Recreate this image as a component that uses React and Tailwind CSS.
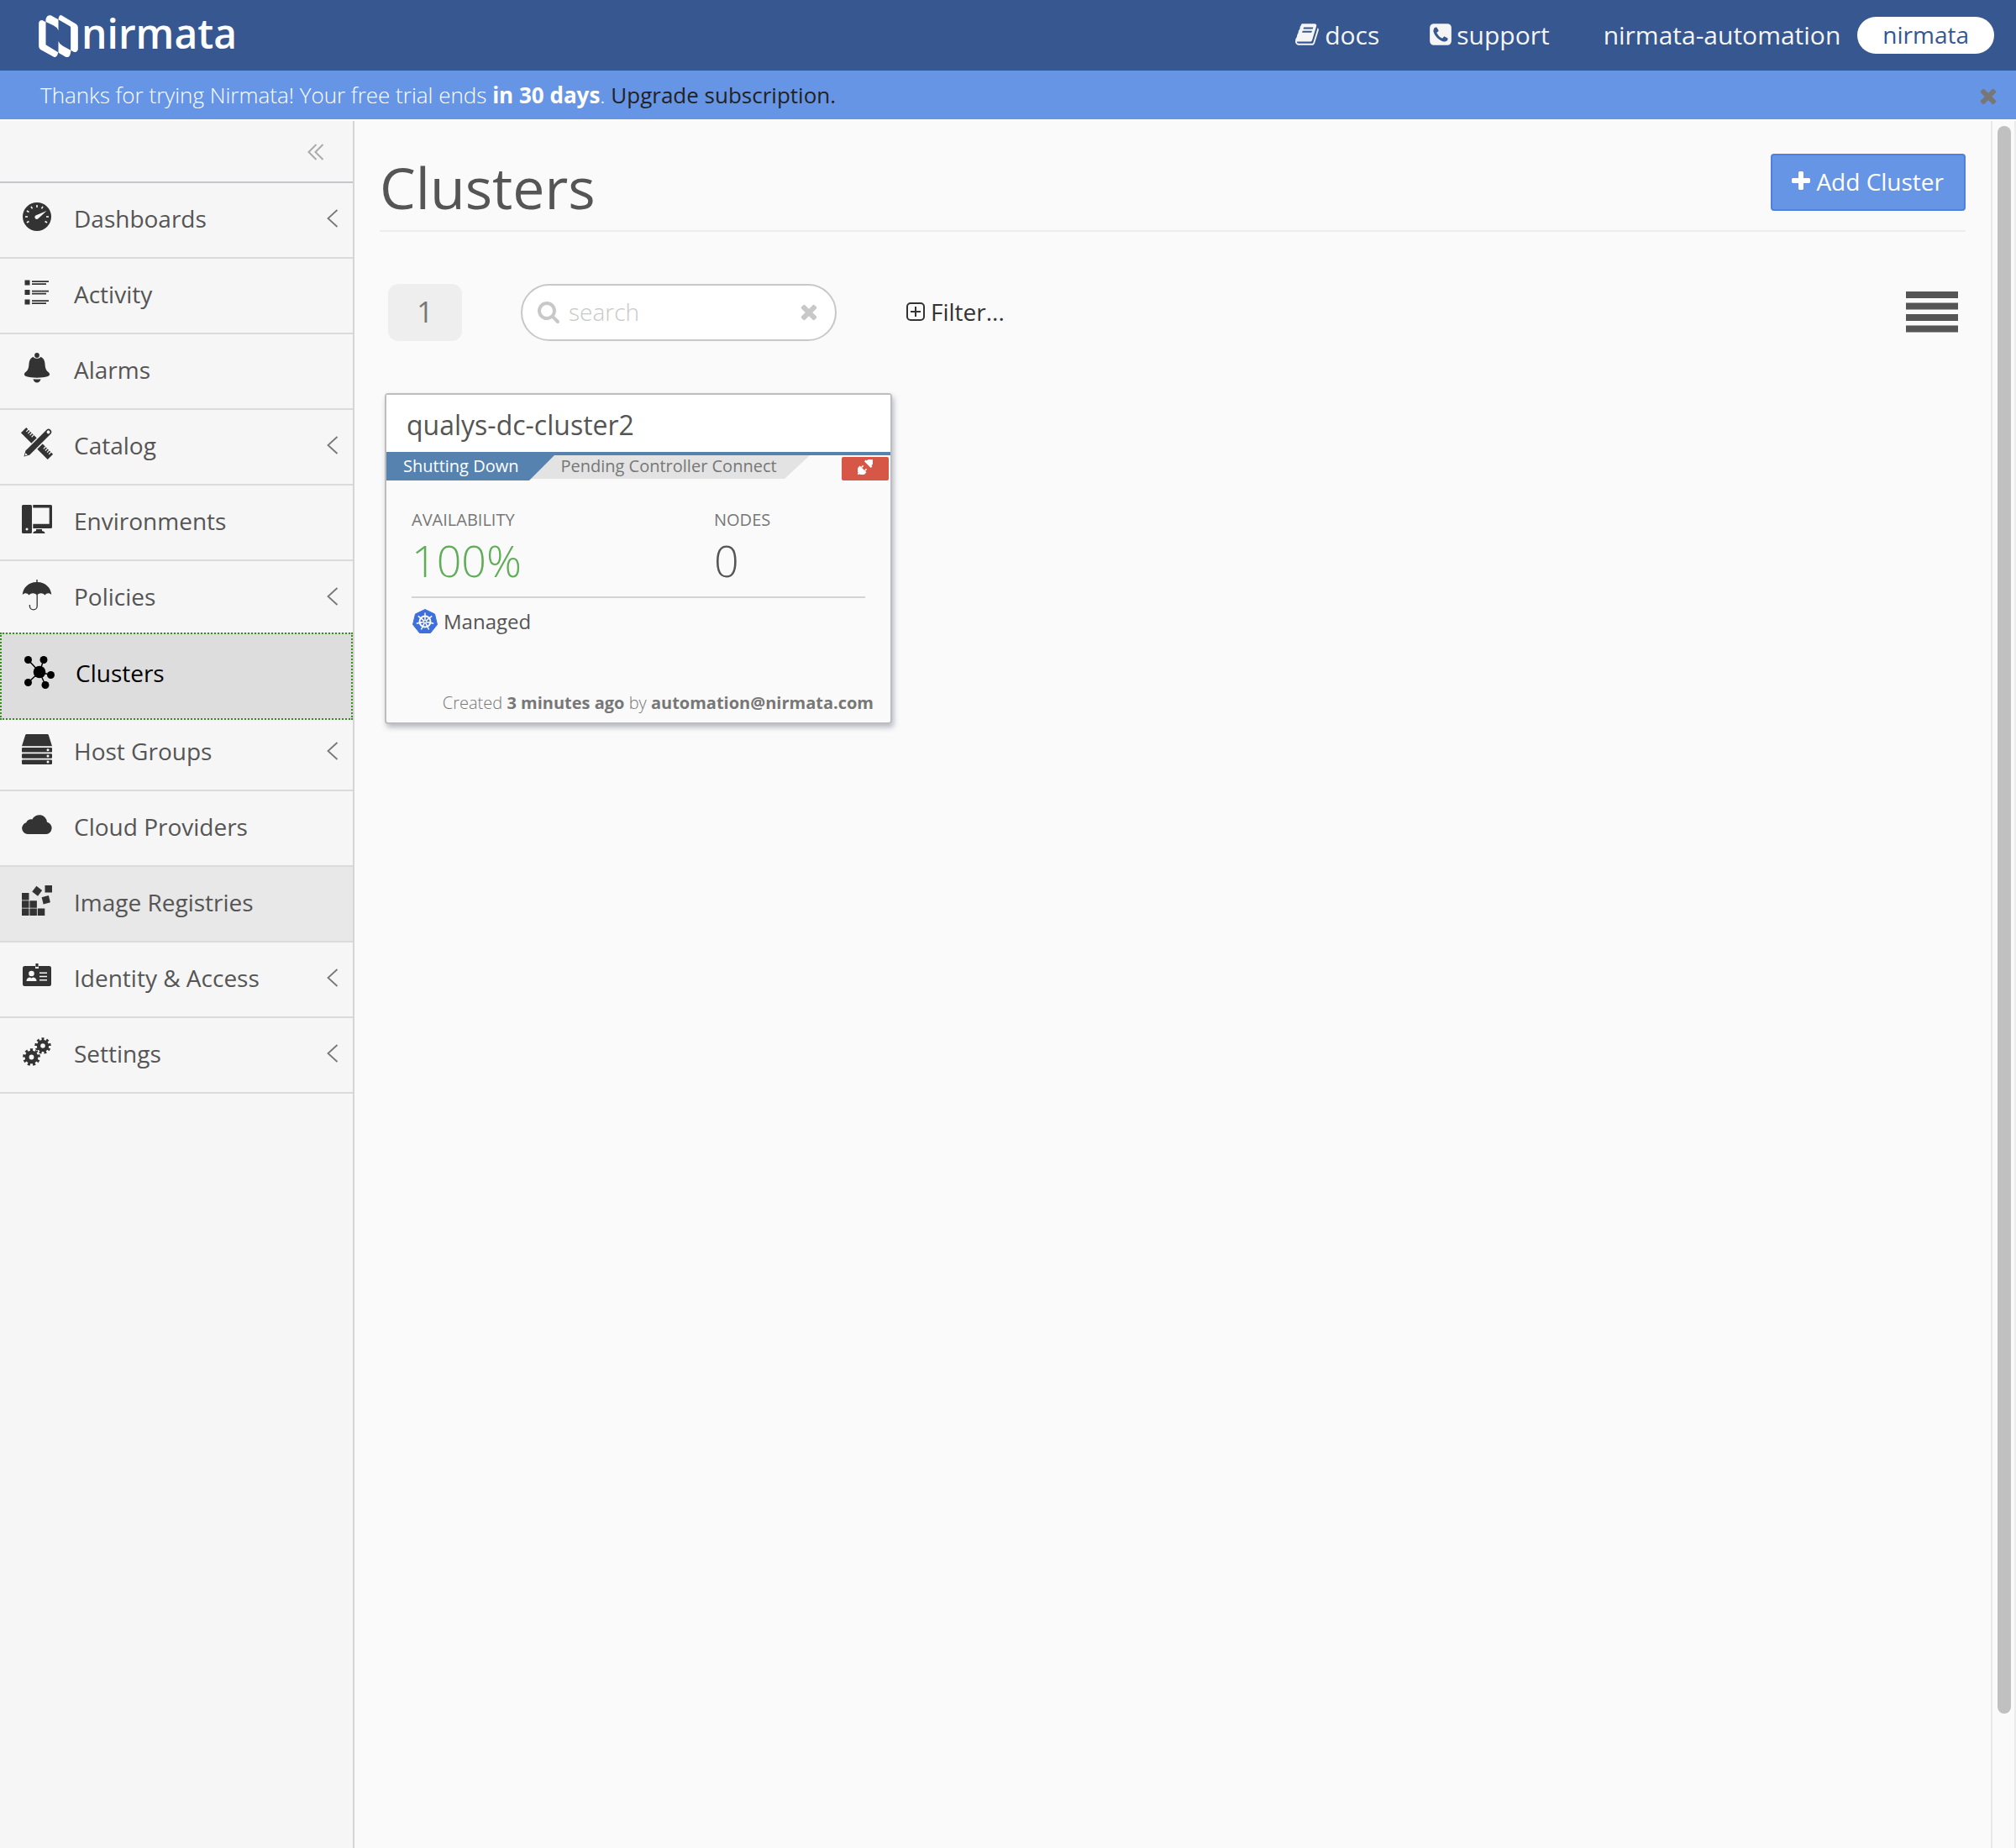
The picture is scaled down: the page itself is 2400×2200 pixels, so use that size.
import React from "react";

const FA = {
  book: "M1639 478q40 57 18 129l-275 906q-19 64-76.500 107.500t-122.500 43.500h-923q-77 0-148.500-53.500t-99.500-131.500q-24-67-2-127 0-4 3-27t4-37q1-8-3-21.500t-3-19.500q2-11 8-21t16.500-23.500 16.500-23.500q23-38 45-91.500t30-91.500q3-10 .5-30t-.5-28q3-11 17-28t17-23q21-36 42-92t25-90q1-9-2.500-32t.5-28q4-13 22-30.500t22-22.500q19-26 42.500-84.500t27.500-96.500q1-8-3-25.500t-2-26.500q2-8 9-18t18-23 17-21q8-12 16.500-30.500t15-35 16-36 19.500-32 26.500-23.500 36-11.500 47.500 5.500l-1 3q38-9 51-9h761q74 0 114 56t18 130l-274 906q-36 119-71.500 153.500t-128.500 34.500h-869q-27 0-38 15-11 16-1 43 24 70 144 70h923q29 0 56-15.500t35-41.500l300-987q7-22 5-57 38 15 59 43zm-1064 2q-4 13 2 22.500t20 9.500h608q13 0 25.500-9.500t16.500-22.500l21-64q4-13-2-22.500t-20-9.500h-608q-13 0-25.500 9.500t-16.500 22.500zm-83 256q-4 13 2 22.500t20 9.500h608q13 0 25.500-9.500t16.500-22.500l21-64q4-13-2-22.500t-20-9.500h-608q-13 0-25.500 9.500t-16.500 22.500z",
  phone: "M1408 1193q0-11-2-16t-18-16.500-40.500-25-47.500-26.500-45.500-25-28.500-15q-5-3-19-13t-25-15-21-5q-15 0-36.500 20.500t-39.500 45-38.500 45-33.500 20.500q-7 0-16.500-3.500t-15.500-6.500-17-9.500-14-8.500q-99-55-170-126.500t-127-170.500q-2-3-8.500-14t-9.500-17-6.500-15.500-3.500-16.500q0-13 20.500-33.500t45-38.500 45-39.500 20.500-36.500q0-10-5-21t-15-25-13-19q-3-6-15-28.500t-25-45.500-26.500-47.500-25-40.500-16.500-18-16-2q-48 0-101 22-46 21-80 94.500t-34 130.500q0 16 2.500 34t5 30.500 9 33 10 29.500 12.500 33 11 30q60 164 216.500 320.500t320.500 216.500q6 2 30 11t33 12.500 29.500 10 33 9 30.500 5 34 2.500q57 0 130.500-34t94.500-80q22-53 22-101zm256-777v960q0 119-84.500 203.500t-203.500 84.500h-960q-119 0-203.500-84.500t-84.500-203.500v-960q0-119 84.500-203.500t203.500-84.500h960q119 0 203.500 84.500t84.500 203.500z",
  times: "M1490 1322q0 40-28 68l-136 136q-28 28-68 28t-68-28l-294-294-294 294q-28 28-68 28t-68-28l-136-136q-28-28-28-68t28-68l294-294-294-294q-28-28-28-68t28-68l136-136q28-28 68-28t68 28l294 294 294-294q28-28 68-28t68 28l136 136q28 28 28 68t-28 68l-294 294 294 294q28 28 28 68z",
  plus: "M1600 736v192q0 40-28 68t-68 28h-416v416q0 40-28 68t-68 28h-192q-40 0-68-28t-28-68v-416h-416q-40 0-68-28t-28-68v-192q0-40 28-68t68-28h416v-416q0-40 28-68t68-28h192q40 0 68 28t28 68v416h416q40 0 68 28t28 68z",
  search: "M1216 832q0-185-131.500-316.500t-316.500-131.500-316.500 131.500-131.500 316.500 131.500 316.500 316.500 131.500 316.500-131.500 131.500-316.500zm512 832q0 52-38 90t-90 38q-54 0-90-38l-343-342q-179 124-399 124-143 0-273.500-55.500t-225-150-150-225-55.500-273.500 55.500-273.500 150-225 225-150 273.500-55.500 273.500 55.500 225 150 150 225 55.500 273.500q0 220-124 399l343 343q37 37 37 90z",
};

function Fa({ name, className }) {
  return (
    <svg viewBox="0 0 1792 1792" fill="currentColor" aria-hidden="true" className={className}>
      <path d={FA[name]} />
    </svg>
  );
}

function gearPath(cx, cy, outer, inner, hole) {
  const teeth = 9;
  const pts = [];
  for (let i = 0; i < teeth; i++) {
    const a = (i * 2 * Math.PI) / teeth - Math.PI / 2;
    const step = (2 * Math.PI) / teeth;
    [[-0.26, inner], [-0.24, outer], [0.24, outer], [0.26, inner]].forEach(([k, r]) => {
      pts.push(`${(cx + r * Math.cos(a + k * step)).toFixed(2)} ${(cy + r * Math.sin(a + k * step)).toFixed(2)}`);
    });
  }
  return `M${pts.join("L")}ZM${cx - hole} ${cy}a${hole} ${hole} 0 1 0 ${hole * 2} 0a${hole} ${hole} 0 1 0 ${-hole * 2} 0Z`;
}

const TICKS = [-120, -90, -60, -30, 0, 30, 90, 120];

const icons = {
  dashboard: (
    <>
      <circle cx="18" cy="18" r="17" />
      <g stroke="#f6f6f6" strokeWidth="1.600">
        {TICKS.map((a) => (
          <path key={a} d="M18 4V7" transform={`rotate(${a} 18 18)`} />
        ))}
      </g>
      <path d="M29.500 11 20 19.800a2.500 2.500 0 1 1-2.300-3.900z" fill="#f6f6f6" />
    </>
  ),
  activity: (
    <>
      <path d="M3.500 3.500h6v6h-6zM3.500 15h6v6h-6zM3.500 26.500h6v6h-6z" />
      <path d="M12 4.300h20v1.600H12zM12 7.300h17v1.600H12zM12 15.800h20v1.600H12zM12 18.800h17v1.600H12zM12 27.300h20v1.600H12zM12 30.300h17v1.600H12z" />
    </>
  ),
  bell: (
    <>
      <circle cx="18" cy="3" r="2.900" />
      <path d="M13.700 4.800C14.500 7.500 21.500 7.500 22.300 4.800 25.500 6 27.300 9 27.500 13c.3 6 1.500 8 4.500 10.500 1.800 1.600 1.300 3.700-1 4.400-7 2.300-19 2.300-26 0-2.300-.7-2.800-2.800-1-4.400C7 21 8.200 19 8.500 13c.2-4 2-7 5.200-8.200z" />
      <path d="M13.500 31.200q4.500.6 9 0-1.200 4.300-4.500 4.300t-4.500-4.300z" />
    </>
  ),
  catalog: (
    <>
      <g transform="rotate(45 18 18)">
        <path d="M-4.500 13.500h45v9h-45z" />
        <path d="M-1 13v4M2 13v4M5 13v4M8 13v4M28 13v4M31 13v4M34 13v4M37 13v4" stroke="#f6f6f6" strokeWidth="1.200" />
      </g>
      <g transform="rotate(45 18 18)">
        <path d="M13.800-1.500a4.200 4.200 0 0 1 8.400 0V34L18 41.500l-4.200-7.500z" stroke="#f6f6f6" strokeWidth="1.500" />
        <circle cx="18" cy="-1.200" r="2" fill="#f6f6f6" />
        <path d="M16.300 35.500h3.400l-1.700 3z" fill="#f6f6f6" />
      </g>
    </>
  ),
  computer: (
    <>
      <path fillRule="evenodd" d="M1.500 1h9A1.500 1.500 0 0 1 12 2.500v31a1.500 1.500 0 0 1-1.500 1.500h-9A1.500 1.500 0 0 1 0 33.500v-31A1.500 1.500 0 0 1 1.500 1zM6 28.500a1.500 1.500 0 1 0 .01 0z" />
      <path fillRule="evenodd" d="M13.300 1H34.500A1.500 1.500 0 0 1 36 2.500v25a1.500 1.500 0 0 1-1.500 1.500H13.300zM13.300 4.500v19.200H32.700V4.500z" />
      <path d="M17 30h7v2q3.500.5 3.500 3H13.300q0-2.500 3.700-3z" />
    </>
  ),
  umbrella: (
    <>
      <path d="M17.300 0h1.400v3C28 3.200 34.500 9.500 35.300 18c-2.800-2.400-5.600-2.400-7.800.4-3-3-6.300-3-9.500 0-3.200-3-6.500-3-9.500 0C6.300 15.600 3.500 15.600.7 18 1.500 9.500 8 3.200 17.300 3z" />
      <path d="M18.200 18v13.500a4.400 4.400 0 0 1-8.800 0V30" fill="none" stroke="currentColor" strokeWidth="1.300" />
    </>
  ),
  cluster: (
    <>
      <path d="M19 19 5.500 4.500M19 19 24 4.500M19 19 32.500 22.500M19 19 5.500 31.500M19 19 26 34.500" stroke="currentColor" strokeWidth="1.500" />
      <circle cx="19" cy="19" r="7.300" />
      <circle cx="5.500" cy="4.500" r="4.500" />
      <circle cx="24" cy="4.500" r="4.500" />
      <circle cx="32.500" cy="22.500" r="4.500" />
      <circle cx="5.500" cy="31.500" r="4.500" />
      <circle cx="26" cy="34.500" r="4.500" />
    </>
  ),
  server: (
    <>
      <path d="M5.500 0h25q1 0 1.300 1L36 14.300H0L4.200 1Q4.500 0 5.500 0z" />
      {[16, 23.200, 30.400].map((y) => (
        <g key={y}>
          <rect x="0" y={y} width="36" height="5.600" rx="1.200" />
          <circle cx="31" cy={y + 2.700} r="1.500" fill="#f6f6f6" />
        </g>
      ))}
    </>
  ),
  cloud: <path d="M7 29a7 7 0 0 1-1.800-13.700A6 6 0 0 1 12.300 11.500 9.300 9.300 0 0 1 30 14.800 7.200 7.200 0 0 1 29 29z" />,
  registry: (
    <>
      <path d="M0 9h8.500v8.500H0zM0 18.300h8.500v8.500H0zM0 27.500h8.500V36H0zM9.400 18.300h8.500v8.500H9.400zM9.400 27.500h8.500V36H9.400zM18.800 27.500h8.500V36h-8.500zM27.500 0H36v8.500h-8.500z" />
      <path d="M14 2.500h8.500V11H14z" transform="rotate(37 18.200 6.700)" />
      <path d="M24.500 13h8.500v8.500h-8.500z" transform="rotate(-14 28.700 17.200)" />
    </>
  ),
  idcard: (
    <>
      <path d="M3.500 6H16v3h4V6h12.500A2.500 2.500 0 0 1 35 8.500v19a2.500 2.500 0 0 1-2.500 2.500h-29A2.500 2.500 0 0 1 1 27.500v-19A2.500 2.500 0 0 1 3.500 6z" />
      <path d="M16.400 3h3.200v4h-3.200z" />
      <g fill="#f6f6f6">
        <circle cx="11.500" cy="15" r="3.300" />
        <path d="M5.500 24q0-4 4-4.600l2 1 2-1q4 .6 4 4.600zM21 13.500h9v1.500h-9zM21 17.800h9v1.500h-9zM21 22h9v1.500h-9z" />
      </g>
    </>
  ),
  cogs: <path fillRule="evenodd" d={gearPath(11.500, 24.500, 10.500, 7.900, 2.900) + gearPath(25, 11, 9.800, 7.200, 2.800)} />,
};

const NAV = [
  ["Dashboards", "dashboard", true],
  ["Activity", "activity"],
  ["Alarms", "bell"],
  ["Catalog", "catalog", true],
  ["Environments", "computer"],
  ["Policies", "umbrella", true],
  ["Clusters", "cluster", false, "active"],
  ["Host Groups", "server", true],
  ["Cloud Providers", "cloud"],
  ["Image Registries", "registry", false, "hover"],
  ["Identity & Access", "idcard", true],
  ["Settings", "cogs", true],
];

const ITEM_STYLE = {
  base: "h-[90px] border-b-2 border-[#dbdbdb] pb-1 text-[#555]",
  hover: "h-[90px] border-b-2 border-[#dbdbdb] bg-[#e8e8e8] pb-1 text-[#555]",
  active: "relative z-10 -my-[5px] h-[104px] border-2 border-dotted border-[#3a8a25] bg-[#ddd] pb-2 text-black",
};

function NavItem({ label, icon, expandable, state = "base" }) {
  return (
    <li className="flex flex-col">
      <a href="#" className={`flex items-center pl-[26px] pr-[17px] ${ITEM_STYLE[state]}`}>
        <svg
          viewBox="0 0 36 36"
          aria-hidden="true"
          className={`mb-1 size-9 shrink-0 overflow-visible ${state === "active" ? "fill-black text-black" : "fill-[#333] text-[#333]"}`}
        >
          {icons[icon]}
        </svg>
        <span className="ml-[26px] flex-1 text-[28px] leading-9">{label}</span>
        {expandable && (
          <svg viewBox="0 0 14 22" className="h-[22px] w-[14px]" fill="none" stroke="#777" strokeWidth="1.800" aria-hidden="true">
            <path d="M12.500 1 1.500 11l11 10" />
          </svg>
        )}
      </a>
    </li>
  );
}

function Header() {
  return (
    <header className="flex h-[84px] items-center bg-[#365790] pl-[46px] pr-[26px] text-[30px] text-[#f5f5f5]">
      <a href="#" className="flex items-center text-white">
        <svg viewBox="48 54 140 150" className="mt-px h-[50px] w-[47px]" fill="currentColor" aria-hidden="true">
          <path d="M48 82Q50 72 60 72L73 79V160L117 187Q114 206 103 204L54 177Q48 173 48 165Z" />
          <path d="M73 68Q78 52 91 55L118 70V109Q112 96 100 91L73 78Z" />
          <path d="M118 70Q119 54 128 54L182 86Q188 90 188 98V177Q184 188 174 186L162 179V99Q162 95 158 93Z" />
          <path d="M118 147Q122 158 134 164L163 180Q161 202 152 204Q146 205 140 201L118 188Z" />
        </svg>
        <span className="mb-1 ml-1 text-[48px] font-semibold leading-[50px]">nirmata</span>
      </a>
      <nav className="ml-auto flex items-center pb-0.5">
        <a href="#" className="flex items-center gap-[5px]">
          <Fa name="book" className="size-[30px]" />
          docs
        </a>
        <a href="#" className="ml-[58px] flex items-center gap-1">
          <Fa name="phone" className="size-[30px]" />
          support
        </a>
        <span className="ml-16">nirmata-automation</span>
        <button type="button" className="ml-5 mt-0.5 h-11 rounded-full bg-white px-[30px] pb-0.5 text-[28px] leading-[42px] text-[#365790]">
          nirmata
        </button>
      </nav>
    </header>
  );
}

function ClusterCard() {
  return (
    <article className="ml-[6px] mt-[62px] flex h-[394px] w-[604px] flex-col rounded border-2 border-[#bdbdbd] shadow-[2px_4px_6px_rgba(60,70,100,0.35)]">
      <h2 className="h-[68px] bg-white pl-6 text-[32px] leading-[72px] text-[#555]">qualys-dc-cluster2</h2>
      <div className="relative flex h-[34px] border-t-4 border-[#5682af] text-[20px] leading-[26px]">
        <svg viewBox="0 0 504 34" className="absolute -top-1 left-0 h-[34px] w-[504px]" aria-hidden="true">
          <path d="M170 32 200 4H504L474 32Z" fill="#e3e3e3" />
          <path d="M0 0H200V4L170 34H0Z" fill="#5682af" />
        </svg>
        <span className="relative pl-5 text-white">Shutting Down</span>
        <span className="relative ml-[50px] text-[#777]">Pending Controller Connect</span>
        <button type="button" aria-label="Disconnected" className="relative ml-auto mr-[2px] mt-[2px] flex h-7 w-14 items-center justify-center rounded-[2px] bg-[#d65745] text-white">
          <svg viewBox="0 0 18 18" className="mb-1 size-[18px]" fill="currentColor" aria-hidden="true">
            <g transform="rotate(45 9 9)">
              <path d="M3.500 2.500H5V.5Q5-2 8-2.300V-4.500h2V-2.300Q13-2 13 .5V2.500h1.500V5h-11z" />
              <path d="M3.500 12.500h11V15q-.5 4-4.500 4.700V22H8v-2.300Q4 19 3.500 15z" />
              <path d="M6.200 12.500v-3M11.800 12.500v-3" stroke="currentColor" strokeWidth="1.500" />
            </g>
          </svg>
        </button>
      </div>
      <dl className="mx-[30px] mt-[34px] flex border-b-2 border-[#d3d3d3] pb-2">
        <div className="w-[360px]">
          <dt className="text-[20px] leading-[26px] text-[#777]">AVAILABILITY</dt>
          <dd className="text-[52px] font-light leading-[70px] text-[#5fad57]">100%</dd>
        </div>
        <div>
          <dt className="text-[20px] leading-[26px] text-[#777]">NODES</dt>
          <dd className="text-[52px] font-light leading-[70px] text-[#555]">0</dd>
        </div>
      </dl>
      <div className="mx-[30px] mt-[10px] flex items-center gap-[7px] text-[24px] leading-9 text-[#555]">
        <span className="flex h-9 w-[31px] items-center justify-center">
          <svg viewBox="0 0 30 30" className="size-[30px] overflow-visible" aria-hidden="true">
            <path d="M15 .5 26.500 6 29.500 18.500 21.500 28.500H8.500L.5 18.500 3.500 6Z" fill="#3d6fdd" stroke="#3d6fdd" strokeLinejoin="round" />
            <g stroke="#fff" fill="none" strokeWidth="1.500">
              <circle cx="15" cy="15" r="6.500" strokeWidth="2" />
              {[0, 51.4, 102.9, 154.3, 205.7, 257.1, 308.6].map((a) => (
                <path key={a} d="M15 14V4.500" transform={`rotate(${a} 15 15)`} />
              ))}
            </g>
          </svg>
        </span>
        Managed
      </div>
      <p className="mb-[9px] mr-5 mt-auto text-right text-[20px] font-light leading-7 text-[#777]">
        Created <b className="font-bold">3 minutes ago</b> by <b className="font-bold">automation@nirmata.com</b>
      </p>
    </article>
  );
}

export default function App() {
  return (
    <div className="flex min-h-screen flex-col bg-[#fafafa] font-['Open_Sans',sans-serif]">
      <Header />
      <div className="flex h-[58px] items-center justify-between bg-[#6795e6] pl-12 pr-[19px] text-[26px] text-white">
        <p className="pt-px font-light">
          Thanks for trying Nirmata! Your free trial ends <b className="font-bold">in 30 days</b>.{" "}
          <a href="#" className="font-normal text-[#222]">Upgrade subscription.</a>
        </p>
        <button type="button" aria-label="Close" className="pt-0.5 text-[#777]">
          <Fa name="times" className="size-[28px]" />
        </button>
      </div>
      <div className="flex flex-1 pt-[2px]">
        <aside className="w-[422px] shrink-0 border-r-2 border-[#d5d5d5] bg-[#f6f6f6]">
          <div className="flex h-[74px] items-center justify-end border-b-2 border-[#c5c7cb] pr-[34px] pt-0.5">
            <button type="button" aria-label="Collapse menu">
              <svg viewBox="0 0 20 20" className="size-5" fill="none" stroke="#aaa" strokeWidth="2" aria-hidden="true">
                <path d="M10.500 1 1.500 10l9 9M18.500 1 9.500 10l9 9" />
              </svg>
            </button>
          </div>
          <nav>
            <ul>
              {NAV.map(([label, icon, expandable, state]) => (
                <NavItem key={label} label={label} icon={icon} expandable={expandable} state={state} />
              ))}
            </ul>
          </nav>
        </aside>
        <main className="min-w-0 flex-1 border-r-2 border-[#e7e7e7] pl-[30px] pr-[30px]">
          <div className="flex h-[132px] items-center justify-between border-b-2 border-[#ededed]">
            <h1 className="pt-7 text-[68px] leading-[96px] text-[#555]">Clusters</h1>
            <button type="button" className="mt-4 flex h-[68px] items-center gap-1 rounded border-2 border-[#4f7fdf] bg-[#6795e6] pb-0.5 pl-5 pr-6 text-[28px] text-white">
              <Fa name="plus" className="size-[28px]" />
              Add Cluster
            </button>
          </div>
          <div className="mt-[62px] flex h-[68px] items-center pl-[10px] pr-[9px] text-[28px]">
            <span className="flex h-[68px] w-[88px] items-center justify-center rounded-xl bg-[#eee] pb-0.5 text-[34px] text-[#777]">1</span>
            <label className="ml-[70px] flex h-[68px] w-[376px] items-center rounded-full border-2 border-[#c8c8c8] bg-white pb-0.5 pl-[17px] pr-[17px] text-[#c8c8c8]">
              <Fa name="search" className="size-[28px] shrink-0" />
              <input
                type="text"
                aria-label="Search clusters"
                placeholder="search"
                className="ml-[10px] w-0 flex-1 font-light text-[#555] outline-none placeholder:text-[#c8c8c8]"
              />
              <button type="button" aria-label="Clear search">
                <Fa name="times" className="size-[28px]" />
              </button>
            </label>
            <button type="button" className="ml-[82px] flex items-center gap-[6px] pb-0.5 text-[#333]">
              <svg viewBox="0 0 24 24" className="size-6" fill="none" stroke="currentColor" strokeWidth="2" aria-hidden="true">
                <rect x="2" y="2" width="20" height="20" rx="4" />
                <path d="M12 6v12M6 12h12" />
              </svg>
              Filter...
            </button>
            <button type="button" aria-label="List view" className="ml-auto text-[#555]">
              <svg viewBox="0 0 62 50" className="h-[50px] w-[62px]" fill="currentColor" aria-hidden="true">
                <path d="M0 0h62v8H0zM0 13.500h62v8H0zM0 27h62v8H0zM0 40.500h62v8H0z" />
              </svg>
            </button>
          </div>
          <ClusterCard />
        </main>
        <div className="flex w-7 justify-center border-r-2 border-[#ececec] pl-0.5 pt-[6px]" aria-hidden="true">
          <div className="h-[calc(100%-160px)] w-4 rounded-full bg-[#c0c0c0]" />
        </div>
      </div>
    </div>
  );
}
